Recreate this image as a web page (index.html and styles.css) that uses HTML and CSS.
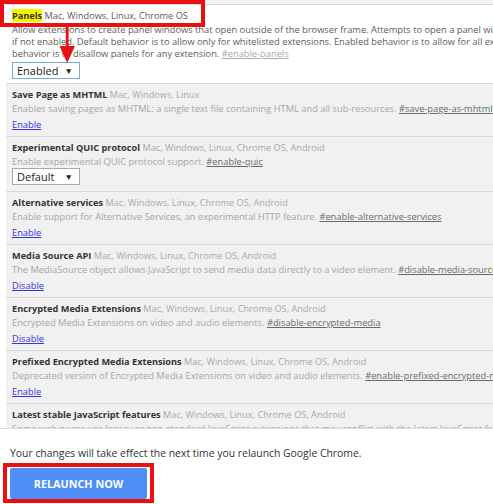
FILE: index.html
```html
<!DOCTYPE html>
<html>
<head>
<meta charset="utf-8">
<link rel="stylesheet" href="styles.css">
</head>
<body>
<div class="page">
  <div class="list">
    <div class="exp ref">
      <div class="title"><span class="name hl">Panels</span> <span class="plat dark">Mac, Windows, Linux, Chrome OS</span></div>
      <div class="desc dark">Allow extensions to create panel windows that open outside of the browser frame. Attempts to open a panel will open a popup instead<br>if not enabled. Default behavior is to allow only for whitelisted extensions. Enabled behavior is to allow for all extensions. Disabled<br>behavior is to disallow panels for any extension. <span class="perm light">#enable-panels</span></div>
      <div class="select focus"><span>Enabled</span><span class="caret">▼</span></div>
    </div>
    <div class="exp">
      <div class="title"><span class="name">Save Page as MHTML</span> <span class="plat">Mac, Windows, Linux</span></div>
      <div class="desc">Enables saving pages as MHTML: a single text file containing HTML and all sub-resources. <span class="perm">#save-page-as-mhtml</span></div>
      <div class="action"><a>Enable</a></div>
    </div>
    <div class="exp">
      <div class="title"><span class="name">Experimental QUIC protocol</span> <span class="plat">Mac, Windows, Linux, Chrome OS, Android</span></div>
      <div class="desc">Enable experimental QUIC protocol support. <span class="perm">#enable-quic</span></div>
      <div class="select"><span>Default</span><span class="caret">▼</span></div>
    </div>
    <div class="exp">
      <div class="title"><span class="name">Alternative services</span> <span class="plat">Mac, Windows, Linux, Chrome OS, Android</span></div>
      <div class="desc">Enable support for Alternative Services, an experimental HTTP feature. <span class="perm">#enable-alternative-services</span></div>
      <div class="action"><a>Enable</a></div>
    </div>
    <div class="exp">
      <div class="title"><span class="name">Media Source API</span> <span class="plat">Mac, Windows, Linux, Chrome OS, Android</span></div>
      <div class="desc">The MediaSource object allows JavaScript to send media data directly to a video element. <span class="perm">#disable-media-source</span></div>
      <div class="action"><a>Disable</a></div>
    </div>
    <div class="exp">
      <div class="title"><span class="name">Encrypted Media Extensions</span> <span class="plat">Mac, Windows, Linux, Chrome OS, Android</span></div>
      <div class="desc">Encrypted Media Extensions on video and audio elements. <span class="perm">#disable-encrypted-media</span></div>
      <div class="action"><a>Disable</a></div>
    </div>
    <div class="exp">
      <div class="title"><span class="name">Prefixed Encrypted Media Extensions</span> <span class="plat">Mac, Windows, Linux, Chrome OS, Android</span></div>
      <div class="desc">Deprecated version of Encrypted Media Extensions on video and audio elements. <span class="perm">#enable-prefixed-encrypted-media</span></div>
      <div class="action"><a>Enable</a></div>
    </div>
    <div class="exp">
      <div class="title"><span class="name">Latest stable JavaScript features</span> <span class="plat">Mac, Windows, Linux, Chrome OS, Android</span></div>
      <div class="desc">Some web pages use legacy or non-standard JavaScript extensions that may conflict with the latest JavaScript features.</div>
    </div>
  </div>
  <div class="footer">
    <div class="notice">Your changes will take effect the next time you relaunch Google Chrome.</div>
    <div class="btn">RELAUNCH NOW</div>
  </div>
</div>
<div class="mark mark-top"></div>
<div class="mark mark-btn"></div>
<svg class="arrow" width="100" height="70" viewBox="0 0 100 70">
  <rect x="65.8" y="27" width="2.8" height="21" fill="#e81010"/>
  <polygon points="59.5,46 75,46 67.2,63" fill="#e81010"/>
</svg>
</body>
</html>
```

FILE: styles.css
```css
* { box-sizing: border-box; }
html, body { margin: 0; padding: 0; }
body {
  width: 493px;
  height: 504px;
  overflow: hidden;
  background: #fff;
  font-family: "Open Sans", "Noto Sans", sans-serif;
  position: relative;
}
.page {
  display: flex;
  flex-direction: column;
  height: 504px;
}
.list {
  flex: 1;
  overflow: hidden;
  margin-left: 6px;
  padding-top: 4px;
  background: #f1f1f1;
}
.exp {
  border-top: 1px solid #d9d9d9;
  padding: 3px 6px 3px;
  white-space: nowrap;
}
.exp.ref { background: #fff; padding-bottom: 4px; }
.title { line-height: 16px; font-size: 9.2px; }
.name { font-weight: 700; color: #333; }
.hl { background: #f4f400; }
.plat { color: #a8a8a8; }
.plat.dark { color: #5c5c5c; }
.desc { line-height: 12px; font-size: 9.3px; color: #a6a6a6; }
.desc.dark { color: #5c5c5c; }
.perm { color: #6a6a6a; text-decoration: underline; }
.perm.light { color: #a8a8a8; }
.action { margin-top: 2px; line-height: 16px; font-size: 9.3px; }
.action a { color: #3434dc; text-decoration: underline; }
.select {
  display: flex;
  align-items: center;
  justify-content: space-between;
  width: 68px;
  height: 17px;
  margin: 0 0 3px;
  padding: 0 6px 0 4px;
  border: 1px solid #a9a9a9;
  background: #fff;
  font-size: 11px;
  color: #222;
}
.select.focus { border-color: #7ba6d6; margin: 2px 0 0; }
.caret { font-size: 8.5px; color: #222; }
.footer {
  height: 76px;
  border-top: 1px solid #dedede;
  padding: 16px 10px 0;
  background: #fff;
}
.notice { line-height: 16px; font-size: 10.4px; color: #333; white-space: nowrap; }
.btn {
  margin-top: 7px;
  width: 137px;
  height: 31px;
  background: #4d8ef7;
  color: #fff;
  font-weight: 700;
  font-size: 10.8px;
  display: flex;
  align-items: center;
  justify-content: center;
  border-radius: 2px;
}
.mark {
  position: absolute;
  border: 4px solid #e81010;
}
.mark-top { left: 0; top: 0; width: 205px; height: 27px; }
.mark-btn { left: 3px; top: 463px; width: 151px; height: 40px; }
.arrow { position: absolute; left: 0; top: 0; }
```
